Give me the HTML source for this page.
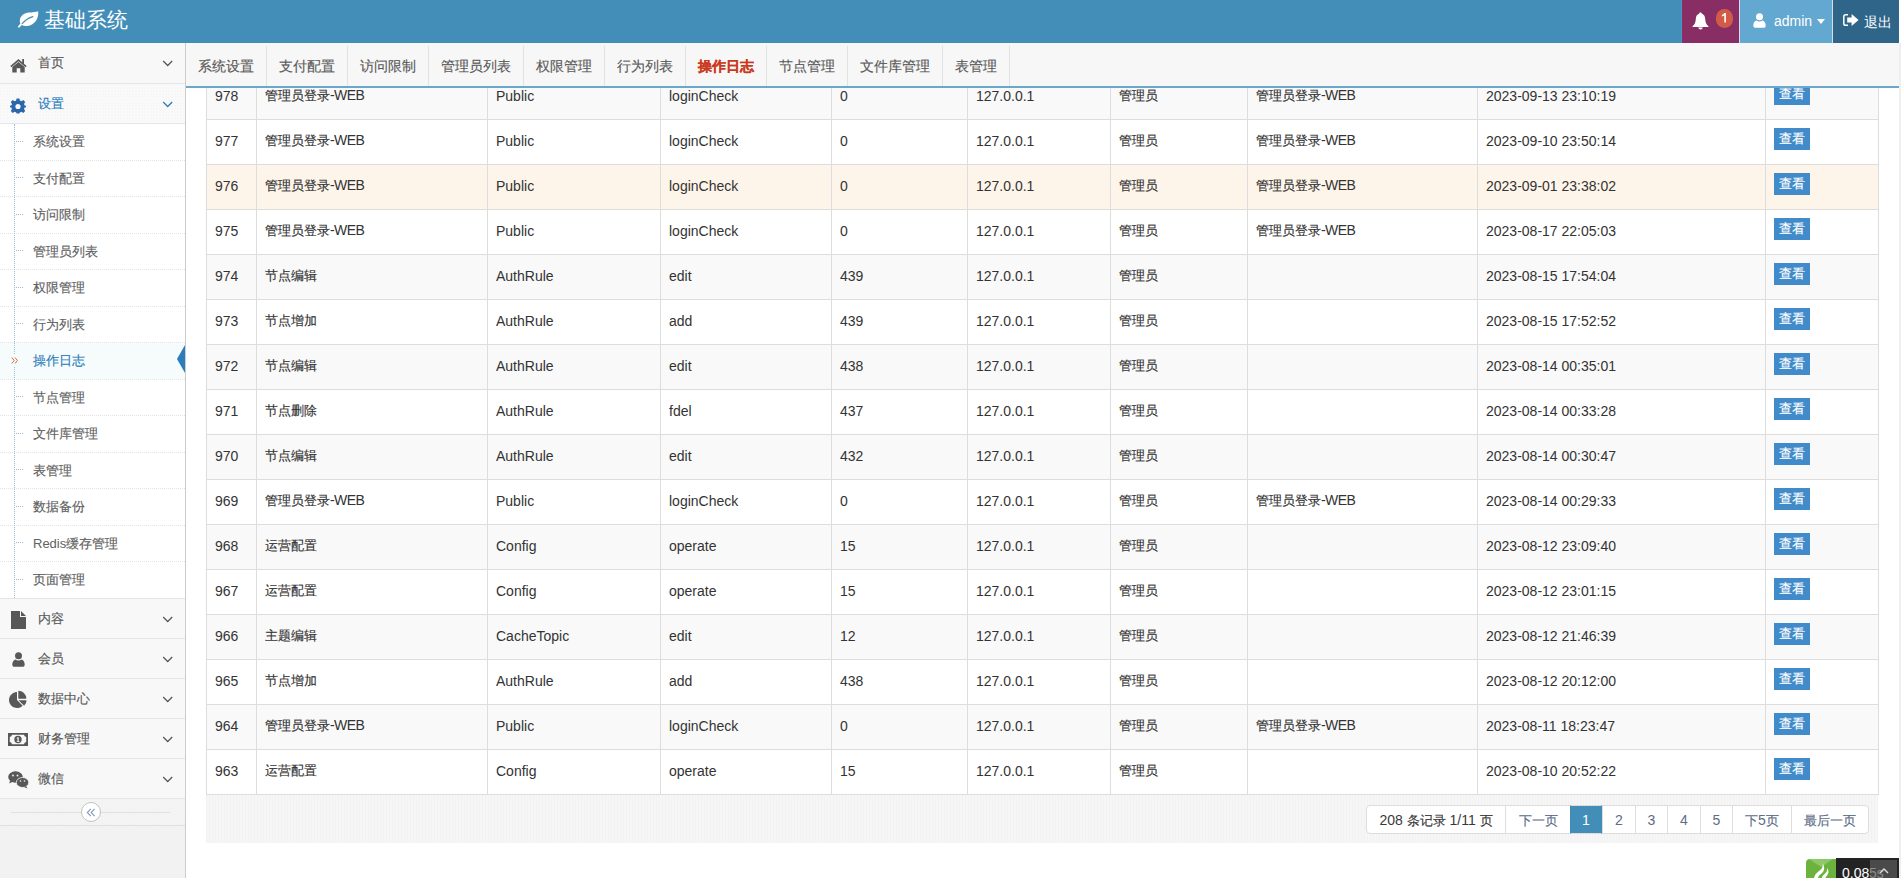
<!DOCTYPE html>
<html><head><meta charset="utf-8"><title>操作日志</title><style>
html,body{margin:0;padding:0}
body{width:1901px;height:878px;overflow:hidden;position:relative;background:#fff;font-family:"Liberation Sans",sans-serif;font-size:14px;color:#393939}
.abs{position:absolute}
#hdr{position:absolute;left:0;top:0;width:1899px;height:43px;background:#438eb9;z-index:5}
#hdr .brand{position:absolute;left:44px;top:5px;font-size:21px;line-height:30px;color:#fff}
#hdr .leaf{position:absolute;left:17px;top:11px}
.nv{position:absolute;top:0;height:43px}
.nv1{left:1682px;width:57px;background:#892e65}
.nv2{left:1740px;width:92px;background:#62a8d1}
.nv3{left:1833px;width:66px;background:#2e6589}
.sep{position:absolute;top:0;height:43px;width:1px;background:#d5dfe6}
.badge{position:absolute;left:34px;top:9px;width:17px;height:19px;border-radius:9px;background:#d15b47;color:#fff;font-size:12px;font-weight:bold;line-height:19px;text-align:center}
.nvtxt{position:absolute;color:#fff;font-size:14px;line-height:20px}
#rstrip{position:absolute;left:1899px;top:43px;width:2px;height:835px;background:#efefef;border-left:0}
#side{position:absolute;left:0;top:43px;width:185px;height:835px;background:#f2f2f2;border-right:1px solid #ccc;z-index:3}
.mi{position:absolute;left:0;width:185px;height:39px;background:#f8f8f8;border-bottom:1px solid #e5e5e5}
.mi .t{position:absolute;left:38px;top:10px;line-height:20px;color:#585858;font-size:13px}
.mi svg.ic{position:absolute;left:10px;top:12px}
.mi svg.ch{position:absolute;left:162px;top:17px}
.dots{background-color:#fff;background-image:linear-gradient(#f8f8f8 2px,transparent 2px),linear-gradient(90deg,#f8f8f8 2px,transparent 2px);background-size:3px 3px}
.sub{position:absolute;left:0;top:124px;width:185px;height:474px;background:#fff}
.si{position:absolute;left:0;width:185px;border-top:1px dotted #e4e4e4}
.si .t{position:absolute;left:33px;line-height:20px;color:#616161;font-size:13px}
.vline{position:absolute;left:14px;top:124px;width:0;height:474px;border-left:1px dotted #9dbdd6}
.hd{position:absolute;left:16px;width:7px;border-top:1px dotted #9dbdd6}
#tabs{position:absolute;left:186px;top:43px;width:1713px;height:43px;background:#f7f7f7;border-bottom:2px solid #69a7cf;z-index:4}
.tab{position:absolute;top:3px;height:40px;border-right:1px solid #e2e2e2;line-height:40px;text-align:center;color:#5a5a5a}
.tab.act{color:#cb3a1e;font-weight:bold}
.tb{position:absolute;left:206px;top:74px;border-collapse:collapse;table-layout:fixed;width:1673px;z-index:1}
.tb td{height:44px;padding:0 0 2px 8px;border:1px solid #ddd;vertical-align:middle;color:#333;white-space:nowrap;overflow:hidden;box-sizing:border-box}
.tb tr{height:45px}
.tb tr.odd td{background:#f9f9f9}
.tb tr.even td{background:#fff}
.tb tr.hov td{background:#fef5ea}
.tb td.op{vertical-align:top;padding-left:8px}
.btn{display:inline-block;margin-top:8px;width:36px;height:22px;background:#428bca;color:#fff;font-size:13px;line-height:22px;text-align:center}
.btn .c{font-size:1em}
#pgbar{position:absolute;left:206px;top:795px;width:1672px;height:48px;background:#f5f5f5;background-image:repeating-linear-gradient(90deg,#f2f2f2 0 1px,#f6f6f6 1px 3px)}
.pg{position:absolute;top:805px;height:29px;border:1px solid #ddd;box-sizing:border-box;background:#fff;line-height:29px;text-align:center;color:#5b6d87}
.dots2{background:#f6fbfb}

.c{font-size:0.93em}
.mi .c,.si .c,.tab .c,.brand .c,.nvtxt .c{font-size:1em}
.dots3{background-color:#f3f3f3;background-image:radial-gradient(#f6f6f6 0.7px,transparent 0.9px);background-size:3px 3px}
.w{letter-spacing:-0.6px}
.tb .c,.si .c,.mi .c,.tab .c,.pg .c{-webkit-text-stroke:0.15px currentColor}

</style></head><body>
<div id="hdr">
  <svg class="leaf" width="22" height="17" viewBox="0 0 22 17"><path d="M21.2 0.3C21.8 6 19.3 12.3 12.8 14.4C9.3 15.5 6.6 15.1 4.8 14.1L2.3 16.4C1.6 17 0.4 16.3 1 15.4L3.4 12.6C1.9 9 3.4 5.1 7 3C11 0.8 16.7 1.9 21.2 0.3Z" fill="#fff"/><path d="M5.2 12.6C8 9.2 11.2 7.2 15.8 5.6" stroke="#438eb9" stroke-width="1.2" fill="none" stroke-linecap="round"/></svg>
  <div class="brand"><span class="c">基础系统</span></div>
  <div class="sep" style="left:1681px;background:#4795c3"></div>
  <div class="nv nv1">
    <svg style="position:absolute;left:10px;top:12px" width="17" height="18" viewBox="0 0 17 18"><path d="M8.5 0.6C9.3 0.6 9.8 1.1 9.9 1.8C12 2.5 13 4.3 13.2 7C13.4 10.5 14.5 12.8 16.5 14.2V14.9H0.5V14.2C2.5 12.8 3.6 10.5 3.8 7C4 4.3 5 2.5 7.1 1.8C7.2 1.1 7.7 0.6 8.5 0.6Z" fill="#fff"/><path d="M6.3 15.5H10.7C10.6 16.7 9.7 17.5 8.5 17.5C7.3 17.5 6.4 16.7 6.3 15.5Z" fill="#fff"/></svg>
    <div class="badge"><svg style="position:absolute;left:5px;top:4px" width="7" height="10" viewBox="0 0 7 10"><path d="M3.3 0H4.9V9.5H3.3V2.3C2.6 2.9 1.8 3.3 0.9 3.6V2.1C2 1.7 2.8 1 3.3 0Z" fill="#fff"/></svg></div>
  </div>
  <div class="sep" style="left:1739px"></div>
  <div class="nv nv2">
    <svg style="position:absolute;left:13px;top:13px" width="13" height="15" viewBox="0 0 13 15"><circle cx="6.5" cy="3.8" r="3.5" fill="#fff"/><path d="M0.3 12.5C0.3 9.5 2 8 3.5 7.6C4.3 8.3 5.3 8.6 6.5 8.6C7.7 8.6 8.7 8.3 9.5 7.6C11 8 12.7 9.5 12.7 12.5C12.7 14 11.8 14.8 10.5 14.8H2.5C1.2 14.8 0.3 14 0.3 12.5Z" fill="#fff"/></svg>
    <div class="nvtxt" style="left:34px;top:11px;font-size:14px">admin</div>
    <svg style="position:absolute;left:77px;top:19px" width="8" height="5" viewBox="0 0 8 5"><path d="M0 0H8L4 5Z" fill="#fff"/></svg>
  </div>
  <div class="sep" style="left:1832px"></div>
  <div class="nv nv3">
    <svg style="position:absolute;left:10px;top:14px" width="16" height="12" viewBox="0 0 16 12"><path d="M5 0.8H2.6C1.5 0.8 0.8 1.5 0.8 2.6V9.4C0.8 10.5 1.5 11.2 2.6 11.2H5" stroke="#fff" stroke-width="1.5" fill="none"/><path d="M4.2 3.6H8.6V0L15.6 6L8.6 12V8.4H4.2Z" fill="#fff"/></svg>
    <div class="nvtxt" style="left:31px;top:12px;font-size:14px"><span class="c">退出</span></div>
  </div>
</div>
<div id="rstrip"></div>

<div id="side">
  <div class="mi" style="top:0;height:40px">
    <svg class="ic" style="top:15px;left:10px" width="17" height="15" viewBox="0 0 17 15"><path d="M8.5 1L0.3 8L1.4 9.2L8.5 3.2L15.6 9.2L16.7 8L14 5.7V1H12.2V4.2Z" fill="#585858"/><path d="M2.3 8.9L8.5 3.9L14.7 8.9V14.5H10.3V10.3H6.7V14.5H2.3Z" fill="#585858"/></svg>
    <div class="t"><span class="c">首页</span></div>
    <svg class="ch" width="11" height="7" viewBox="0 0 11 7"><path d="M1.2 1L5.7 5.5L10.2 1" stroke="#585858" stroke-width="1.3" fill="none"/></svg>
  </div>
  <div class="mi dots" style="top:41px;height:39px">
    <svg class="ic" style="top:14px" width="16" height="16" viewBox="0 0 16 16"><path d="M6.6 0.5H9.4L9.9 2.6L11.4 3.3L13.3 2.1L15.2 4L14 5.9L14.7 7.4L16 7.7V9.3L14.7 9.6L14 11.1L15.2 13L13.3 14.9L11.4 13.7L9.9 14.4L9.4 15.5H6.6L6.1 14.4L4.6 13.7L2.7 14.9L0.8 13L2 11.1L1.3 9.6L0 9.3V7.7L1.3 7.4L2 5.9L0.8 4L2.7 2.1L4.6 3.3L6.1 2.6Z" fill="#2a67ad"/><circle cx="8" cy="8.5" r="2.6" fill="#fafafa"/></svg>
    <div class="t" style="color:#2b7dbc"><span class="c">设置</span></div>
    <svg class="ch" width="11" height="7" viewBox="0 0 11 7"><path d="M1.2 1L5.7 5.5L10.2 1" stroke="#2b7dbc" stroke-width="1.3" fill="none"/></svg>
  </div>
  <div class="sub" style="top:81px"></div>
  <div class="si" style="top:81px;height:36px;border-top:0;"><div class="t" style="top:8.0px;"><span class="c">系统设置</span></div></div>
<div class="hd" style="top:98px"></div>
<div class="si" style="top:117px;height:35px;"><div class="t" style="top:7.5px;"><span class="c">支付配置</span></div></div>
<div class="hd" style="top:134px"></div>
<div class="si" style="top:153px;height:36px;"><div class="t" style="top:8.0px;"><span class="c">访问限制</span></div></div>
<div class="hd" style="top:171px"></div>
<div class="si" style="top:190px;height:35px;"><div class="t" style="top:7.5px;"><span class="c">管理员列表</span></div></div>
<div class="hd" style="top:207px"></div>
<div class="si" style="top:226px;height:36px;"><div class="t" style="top:8.0px;"><span class="c">权限管理</span></div></div>
<div class="hd" style="top:244px"></div>
<div class="si" style="top:263px;height:35px;"><div class="t" style="top:7.5px;"><span class="c">行为列表</span></div></div>
<div class="hd" style="top:280px"></div>
<div class="si dots2" style="top:299px;height:36px;"><div class="t" style="top:8.0px;color:#2b7dbc;"><span class="c">操作日志</span></div></div>
<div class="abs" style="left:13px;top:311px;width:3px;height:13px;background:#f6fbfb;z-index:2"></div>
<svg class="abs" style="left:11px;top:314px;z-index:3" width="8" height="7" viewBox="0 0 8 7"><path d="M0.8 0.5L3.2 3.5L0.8 6.5M4 0.5L6.4 3.5L4 6.5" stroke="#d06a3e" stroke-width="1" fill="none"/></svg>
<svg class="abs" style="left:177px;top:302px" width="8" height="28" viewBox="0 0 8 28"><path d="M8 0L0 14L8 28Z" fill="#2b7dbc"/></svg>
<div class="si" style="top:336px;height:35px;"><div class="t" style="top:7.5px;"><span class="c">节点管理</span></div></div>
<div class="hd" style="top:353px"></div>
<div class="si" style="top:372px;height:36px;"><div class="t" style="top:8.0px;"><span class="c">文件库管理</span></div></div>
<div class="hd" style="top:390px"></div>
<div class="si" style="top:409px;height:35px;"><div class="t" style="top:7.5px;"><span class="c">表管理</span></div></div>
<div class="hd" style="top:426px"></div>
<div class="si" style="top:445px;height:36px;"><div class="t" style="top:8.0px;"><span class="c">数据备份</span></div></div>
<div class="hd" style="top:463px"></div>
<div class="si" style="top:482px;height:35px;"><div class="t" style="top:7.5px;">Redis<span class="c">缓存管理</span></div></div>
<div class="hd" style="top:499px"></div>
<div class="si" style="top:518px;height:36px;"><div class="t" style="top:8.0px;"><span class="c">页面管理</span></div></div>
<div class="hd" style="top:536px"></div>
  <div class="vline" style="top:81px"></div>
  <div class="mi" style="top:556px;border-top:1px solid #e5e5e5;height:39px;top:555px"><svg class="ic" style="left:11px;top:12px" width="15" height="18" viewBox="0 0 15 18"><path d="M0 0H9V6H15V18H0Z" fill="#585858"/><path d="M10 0L15 5H10Z" fill="#585858"/></svg><div class="t"><span class="c">内容</span></div><svg class="ch" width="11" height="7" viewBox="0 0 11 7"><path d="M1.2 1L5.7 5.5L10.2 1" stroke="#585858" stroke-width="1.3" fill="none"/></svg></div>
<div class="mi" style="top:596px;border-top:1px solid #e5e5e5;height:39px;top:595px"><svg class="ic" style="left:12px;top:13px" width="13" height="15" viewBox="0 0 13 15"><circle cx="6.5" cy="3.8" r="3.5" fill="#585858"/><path d="M0.3 12.5C0.3 9.5 2 8 3.5 7.6C4.3 8.3 5.3 8.6 6.5 8.6C7.7 8.6 8.7 8.3 9.5 7.6C11 8 12.7 9.5 12.7 12.5C12.7 14 11.8 14.8 10.5 14.8H2.5C1.2 14.8 0.3 14 0.3 12.5Z" fill="#585858"/></svg><div class="t"><span class="c">会员</span></div><svg class="ch" width="11" height="7" viewBox="0 0 11 7"><path d="M1.2 1L5.7 5.5L10.2 1" stroke="#585858" stroke-width="1.3" fill="none"/></svg></div>
<div class="mi" style="top:636px;border-top:1px solid #e5e5e5;height:39px;top:635px"><svg class="ic" style="left:8px;top:11px" width="19" height="19" viewBox="0 0 19 19"><path d="M9 10V2A8 8 0 1 0 14.66 15.66Z" fill="#585858"/><path d="M10.3 8.7V0.7A8 8 0 0 1 18.3 8.7Z" fill="#585858"/><path d="M10.5 10.2H18.5A8 8 0 0 1 16.16 15.86Z" fill="#585858"/></svg><div class="t"><span class="c">数据中心</span></div><svg class="ch" width="11" height="7" viewBox="0 0 11 7"><path d="M1.2 1L5.7 5.5L10.2 1" stroke="#585858" stroke-width="1.3" fill="none"/></svg></div>
<div class="mi" style="top:676px;border-top:1px solid #e5e5e5;height:39px;top:675px"><svg class="ic" style="left:8px;top:14px" width="20" height="13" viewBox="0 0 20 13"><rect x="0" y="0" width="20" height="13" fill="#585858"/><path d="M4 1.8H16A2.4 2.4 0 0 0 18.2 4V9A2.4 2.4 0 0 0 16 11.2H4A2.4 2.4 0 0 0 1.8 9V4A2.4 2.4 0 0 0 4 1.8Z" fill="#f8f8f8"/><circle cx="10" cy="6.5" r="3.7" fill="#585858"/><path d="M9.6 4.3H10.7V8.3H11.5V9H8.7V8.3H9.5V5.4L8.8 5.8V5Z" fill="#f8f8f8"/></svg><div class="t"><span class="c">财务管理</span></div><svg class="ch" width="11" height="7" viewBox="0 0 11 7"><path d="M1.2 1L5.7 5.5L10.2 1" stroke="#585858" stroke-width="1.3" fill="none"/></svg></div>
<div class="mi" style="top:716px;border-top:1px solid #e5e5e5;height:39px;top:715px"><svg class="ic" style="left:8px;top:12px" width="21" height="18" viewBox="0 0 21 18"><ellipse cx="7.5" cy="6" rx="7.3" ry="5.8" fill="#585858"/><path d="M2 9.5L1.3 12.5L5 10.5Z" fill="#585858"/><ellipse cx="14.5" cy="11.5" rx="6.2" ry="5" fill="#585858" stroke="#f8f8f8" stroke-width="0.8"/><path d="M18 15L19.5 17.5L16 16Z" fill="#585858"/><circle cx="5" cy="4.5" r="0.9" fill="#f8f8f8"/><circle cx="9.5" cy="4.5" r="0.9" fill="#f8f8f8"/><circle cx="12.5" cy="10" r="0.8" fill="#f8f8f8"/><circle cx="16.5" cy="10" r="0.8" fill="#f8f8f8"/></svg><div class="t"><span class="c">微信</span></div><svg class="ch" width="11" height="7" viewBox="0 0 11 7"><path d="M1.2 1L5.7 5.5L10.2 1" stroke="#585858" stroke-width="1.3" fill="none"/></svg></div>
  <div class="abs dots3" style="left:0;top:756px;width:185px;height:26px;border-bottom:1px solid #e0e0e0"></div>
  <div class="abs" style="left:11px;top:769px;width:159px;height:0;border-top:1px solid #e0e0e0"></div>
  <div class="abs" style="left:81px;top:759px;width:20px;height:20px;border:1px solid #c2c2c2;border-radius:50%;background:#fff;box-sizing:border-box">
    <svg style="position:absolute;left:4px;top:5px" width="10" height="9" viewBox="0 0 10 9"><path d="M4.8 0.8L1.3 4.5L4.8 8.2M8.6 0.8L5.1 4.5L8.6 8.2" stroke="#8499ba" stroke-width="1.1" fill="none"/></svg>
  </div>
</div>

<div id="tabs">
  <div class="tab" style="left:0px;width:80px"><span class="c">系统设置</span></div>
<div class="tab" style="left:81px;width:80px"><span class="c">支付配置</span></div>
<div class="tab" style="left:162px;width:80px"><span class="c">访问限制</span></div>
<div class="tab" style="left:243px;width:94px"><span class="c">管理员列表</span></div>
<div class="tab" style="left:338px;width:80px"><span class="c">权限管理</span></div>
<div class="tab" style="left:419px;width:80px"><span class="c">行为列表</span></div>
<div class="tab act" style="left:500px;width:80px"><span class="c">操作日志</span></div>
<div class="tab" style="left:581px;width:80px"><span class="c">节点管理</span></div>
<div class="tab" style="left:662px;width:94px"><span class="c">文件库管理</span></div>
<div class="tab" style="left:757px;width:66px"><span class="c">表管理</span></div>
</div>

<table class="tb"><colgroup><col style="width:50px"><col style="width:231px"><col style="width:173px"><col style="width:171px"><col style="width:136px"><col style="width:143px"><col style="width:137px"><col style="width:230px"><col style="width:288px"><col style="width:113px"></colgroup><tbody><tr class="odd"><td>978</td><td><span class="c">管理员登录</span><span class="w">-WEB</span></td><td>Public</td><td>loginCheck</td><td>0</td><td>127.0.0.1</td><td><span class="c">管理员</span></td><td><span class="c">管理员登录</span><span class="w">-WEB</span></td><td>2023-09-13 23:10:19</td><td class="op"><span class="btn"><span class="c">查看</span></span></td></tr><tr class="even"><td>977</td><td><span class="c">管理员登录</span><span class="w">-WEB</span></td><td>Public</td><td>loginCheck</td><td>0</td><td>127.0.0.1</td><td><span class="c">管理员</span></td><td><span class="c">管理员登录</span><span class="w">-WEB</span></td><td>2023-09-10 23:50:14</td><td class="op"><span class="btn"><span class="c">查看</span></span></td></tr><tr class="hov"><td>976</td><td><span class="c">管理员登录</span><span class="w">-WEB</span></td><td>Public</td><td>loginCheck</td><td>0</td><td>127.0.0.1</td><td><span class="c">管理员</span></td><td><span class="c">管理员登录</span><span class="w">-WEB</span></td><td>2023-09-01 23:38:02</td><td class="op"><span class="btn"><span class="c">查看</span></span></td></tr><tr class="even"><td>975</td><td><span class="c">管理员登录</span><span class="w">-WEB</span></td><td>Public</td><td>loginCheck</td><td>0</td><td>127.0.0.1</td><td><span class="c">管理员</span></td><td><span class="c">管理员登录</span><span class="w">-WEB</span></td><td>2023-08-17 22:05:03</td><td class="op"><span class="btn"><span class="c">查看</span></span></td></tr><tr class="odd"><td>974</td><td><span class="c">节点编辑</span></td><td>AuthRule</td><td>edit</td><td>439</td><td>127.0.0.1</td><td><span class="c">管理员</span></td><td></td><td>2023-08-15 17:54:04</td><td class="op"><span class="btn"><span class="c">查看</span></span></td></tr><tr class="even"><td>973</td><td><span class="c">节点增加</span></td><td>AuthRule</td><td>add</td><td>439</td><td>127.0.0.1</td><td><span class="c">管理员</span></td><td></td><td>2023-08-15 17:52:52</td><td class="op"><span class="btn"><span class="c">查看</span></span></td></tr><tr class="odd"><td>972</td><td><span class="c">节点编辑</span></td><td>AuthRule</td><td>edit</td><td>438</td><td>127.0.0.1</td><td><span class="c">管理员</span></td><td></td><td>2023-08-14 00:35:01</td><td class="op"><span class="btn"><span class="c">查看</span></span></td></tr><tr class="even"><td>971</td><td><span class="c">节点删除</span></td><td>AuthRule</td><td>fdel</td><td>437</td><td>127.0.0.1</td><td><span class="c">管理员</span></td><td></td><td>2023-08-14 00:33:28</td><td class="op"><span class="btn"><span class="c">查看</span></span></td></tr><tr class="odd"><td>970</td><td><span class="c">节点编辑</span></td><td>AuthRule</td><td>edit</td><td>432</td><td>127.0.0.1</td><td><span class="c">管理员</span></td><td></td><td>2023-08-14 00:30:47</td><td class="op"><span class="btn"><span class="c">查看</span></span></td></tr><tr class="even"><td>969</td><td><span class="c">管理员登录</span><span class="w">-WEB</span></td><td>Public</td><td>loginCheck</td><td>0</td><td>127.0.0.1</td><td><span class="c">管理员</span></td><td><span class="c">管理员登录</span><span class="w">-WEB</span></td><td>2023-08-14 00:29:33</td><td class="op"><span class="btn"><span class="c">查看</span></span></td></tr><tr class="odd"><td>968</td><td><span class="c">运营配置</span></td><td>Config</td><td>operate</td><td>15</td><td>127.0.0.1</td><td><span class="c">管理员</span></td><td></td><td>2023-08-12 23:09:40</td><td class="op"><span class="btn"><span class="c">查看</span></span></td></tr><tr class="even"><td>967</td><td><span class="c">运营配置</span></td><td>Config</td><td>operate</td><td>15</td><td>127.0.0.1</td><td><span class="c">管理员</span></td><td></td><td>2023-08-12 23:01:15</td><td class="op"><span class="btn"><span class="c">查看</span></span></td></tr><tr class="odd"><td>966</td><td><span class="c">主题编辑</span></td><td>CacheTopic</td><td>edit</td><td>12</td><td>127.0.0.1</td><td><span class="c">管理员</span></td><td></td><td>2023-08-12 21:46:39</td><td class="op"><span class="btn"><span class="c">查看</span></span></td></tr><tr class="even"><td>965</td><td><span class="c">节点增加</span></td><td>AuthRule</td><td>add</td><td>438</td><td>127.0.0.1</td><td><span class="c">管理员</span></td><td></td><td>2023-08-12 20:12:00</td><td class="op"><span class="btn"><span class="c">查看</span></span></td></tr><tr class="odd"><td>964</td><td><span class="c">管理员登录</span><span class="w">-WEB</span></td><td>Public</td><td>loginCheck</td><td>0</td><td>127.0.0.1</td><td><span class="c">管理员</span></td><td><span class="c">管理员登录</span><span class="w">-WEB</span></td><td>2023-08-11 18:23:47</td><td class="op"><span class="btn"><span class="c">查看</span></span></td></tr><tr class="even"><td>963</td><td><span class="c">运营配置</span></td><td>Config</td><td>operate</td><td>15</td><td>127.0.0.1</td><td><span class="c">管理员</span></td><td></td><td>2023-08-10 20:52:22</td><td class="op"><span class="btn"><span class="c">查看</span></span></td></tr></tbody></table>

<div id="pgbar"></div>
<div class="pg" style="left:1366px;width:140px;border-radius:4px 0 0 4px;color:#393939;">208 <span class="c">条记录</span> 1/11 <span class="c">页</span></div>
<div class="pg" style="left:1505px;width:66px;"><span class="c">下一页</span></div>
<div class="pg" style="left:1570px;width:33px;background:#438eb9;border-color:#ddd #438eb9;color:#fff;z-index:2;width:32px;">1</div>
<div class="pg" style="left:1602px;width:34px;">2</div>
<div class="pg" style="left:1635px;width:33px;">3</div>
<div class="pg" style="left:1667px;width:34px;">4</div>
<div class="pg" style="left:1700px;width:33px;">5</div>
<div class="pg" style="left:1732px;width:60px;"><span class="c">下</span>5<span class="c">页</span></div>
<div class="pg" style="left:1791px;width:78px;border-radius:0 4px 4px 0;"><span class="c">最后一页</span></div>

<div class="abs" style="left:1806px;top:859px;width:30px;height:19px;background:#6cb33e;border-radius:4px 0 0 0;overflow:hidden">
<svg style="position:absolute;left:0;top:0" width="30" height="19" viewBox="0 0 30 19"><path d="M3 0H27L15 8Z" fill="#8cc867"/><path d="M16.5 4C17.5 7 16 10 13 12C10.5 13.8 8.5 16 8 19H12C12.5 17 14 15.5 16 14C18.5 12 19 8 16.5 4Z" fill="#fff"/><path d="M21 9C21.5 11.5 20.5 13.5 18.5 15C17 16.2 16 17.5 15.8 19H19.5C20 17.5 21 16.5 22 15C23 13 22.5 11 21 9Z" fill="#fff"/></svg></div>
<div class="abs" style="left:1836px;top:858px;width:63px;height:20px;background:#232323"></div>
<div class="abs" style="left:1870px;top:860px;width:27px;height:18px;background:#4a4a4a"></div>
<div class="abs" style="left:1842px;top:864px;color:#fff;font-size:14px;line-height:18px">0.08</div>
<div class="abs" style="left:1869px;top:864px;color:#8a8a8a;font-size:14px;line-height:18px">5s</div>
<svg class="abs" style="left:1879px;top:867px" width="10" height="7" viewBox="0 0 10 7"><path d="M1 6L5 2L9 6" stroke="#ddd" stroke-width="1.4" fill="none"/></svg>

</body></html>
